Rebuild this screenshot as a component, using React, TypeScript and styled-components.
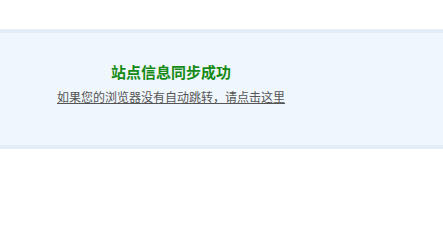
import React from 'react';
import styled, { createGlobalStyle } from 'styled-components';

const GlobalStyle = createGlobalStyle`
  html, body {
    margin: 0;
    padding: 0;
    background: #ffffff;
    font-family: "SimSun", "Noto Sans CJK SC", sans-serif;
  }
`;

const Page = styled.div`
  padding-top: 29px;
`;

const MessageBar = styled.div`
  height: 112px;
  background-color: #f0f7fc;
  border-top: 4px solid #e3edf7;
  border-bottom: 4px solid #e3edf7;
`;

const Content = styled.div`
  width: 342px;
  padding-top: 30px;
  display: flex;
  flex-direction: column;
  align-items: center;
`;

const Title = styled.h1`
  margin: 0;
  font-size: 15px;
  line-height: 18px;
  font-weight: bold;
  color: #168a16;
`;

const RedirectLink = styled.a`
  margin-top: 8px;
  font-size: 12px;
  line-height: 16px;
  color: #555555;
  text-decoration: underline;
  cursor: pointer;
`;

function App() {
  return (
    <>
      <GlobalStyle />
      <Page>
        <MessageBar>
          <Content>
            <Title>站点信息同步成功</Title>
            <RedirectLink href="#">如果您的浏览器没有自动跳转，请点击这里</RedirectLink>
          </Content>
        </MessageBar>
      </Page>
    </>
  );
}

export default App;
